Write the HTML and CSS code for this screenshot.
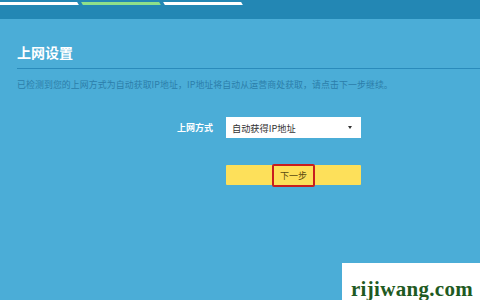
FILE: index.html
```html
<!DOCTYPE html>
<html lang="zh">
<head>
<meta charset="utf-8">
<link rel="stylesheet" href="styles.css">
</head>
<body>
<div class="page">
  <header class="topbar">
    <div class="steps">
      <span class="step"></span>
      <span class="step active"></span>
      <span class="step"></span>
    </div>
  </header>
  <main class="content">
    <h1 class="title">上网设置</h1>
    <p class="desc">已检测到您的上网方式为自动获取IP地址，IP地址将自动从运营商处获取，请点击下一步继续。</p>
    <div class="form">
      <div class="row">
        <label class="label">上网方式</label>
        <div class="select"><span>自动获得IP地址</span><span class="arrow"></span></div>
      </div>
      <div class="row btnrow">
        <button class="next"><span class="hl">下一步</span></button>
      </div>
    </div>
  </main>
  <div class="watermark">rijiwang.com</div>
</div>
</body>
</html>
```
FILE: styles.css
```css
html, body { margin: 0; padding: 0; }
body {
  width: 480px; height: 300px; overflow: hidden;
  background: #4badd7;
  font-family: "Noto Sans CJK SC", "Noto Sans", sans-serif;
}
.page { position: relative; width: 480px; height: 300px; }
.topbar {
  height: 19px;
  background: #2387b4;
  padding-top: 2px;
  box-sizing: border-box;
}
.steps { display: flex; gap: 4px; width: 242px; }
.step {
  height: 3px; width: 78px; background: #ffffff;
  transform: skewX(30deg);
}
.step:first-child { margin-left: -2px; width: 80px; }
.step.active { background: #8ee08a; }
.content { padding: 0 0 0 17px; }
.title {
  margin: 0; padding-top: 23px;
  font-size: 14px; font-weight: bold; color: #ffffff;
  line-height: 20px; height: 26px;
  border-bottom: 1px solid #2a8bbb;
}
.desc {
  margin: 9px 0 0; font-size: 8.9px; line-height: 14px;
  color: #2c7eaa; white-space: nowrap; letter-spacing: 0.1px;
}
.form { margin-top: 25px; display: flex; flex-direction: column; gap: 27px; }
.row { display: flex; align-items: center; }
.label {
  width: 37px; margin-left: 160px; margin-right: 12px;
  font-size: 9px; font-weight: bold; color: #ffffff; white-space: nowrap;
}
.select {
  width: 135px; height: 21px; background: #fff; box-sizing: border-box;
  display: flex; align-items: center; justify-content: space-between;
  padding: 0 9px 0 6px;
  font-size: 9.2px; color: #333;
}
.arrow {
  width: 0; height: 0;
  border-left: 2.5px solid transparent; border-right: 2.5px solid transparent;
  border-top: 3px solid #333;
}
.btnrow { padding-left: 209px; }
.next {
  width: 135px; height: 20px; border: none; padding: 0; margin: 0;
  background: #fde05a; display: flex; justify-content: center; align-items: center;
  font-family: inherit; border-radius: 1px;
}
.hl {
  width: 43px; height: 23px; box-sizing: border-box;
  border: 2px solid #c81e1e; border-radius: 2px;
  display: flex; align-items: center; justify-content: center;
  font-size: 9px; color: #5a4a10;
}
.watermark {
  position: absolute; left: 342px; top: 263px; width: 138px; height: 37px;
  background: #fff; box-sizing: border-box;
  padding: 14px 0 0 9px;
  font-family: "Liberation Serif", serif; font-weight: bold;
  font-size: 21px; line-height: 24px; color: #1f5a22;
  letter-spacing: 0.3px; overflow: hidden; white-space: nowrap;
}
```
